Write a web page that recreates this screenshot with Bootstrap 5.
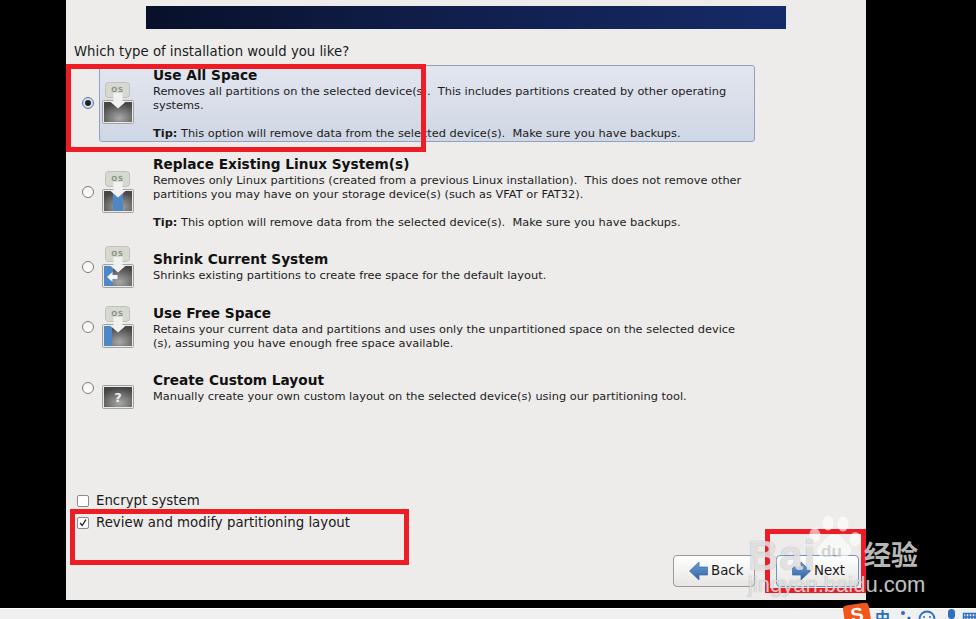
<!DOCTYPE html>
<html lang="en"><head><meta charset="utf-8"><title>Installer</title>
<link rel="stylesheet" href="https://cdn.jsdelivr.net/npm/bootstrap@5.3.0/dist/css/bootstrap.min.css">
<style>
html,body{height:619px;overflow:hidden;background:#000}
body{position:relative;font-family:"DejaVu Sans",sans-serif;color:#1a1a1a}
.stage{width:800px;height:600px;margin-left:66px;background:#edecea;position:relative}
.banner{height:23px;width:640px;margin:0 0 0 80px;background:linear-gradient(90deg,#081029 0%,#0f1d47 40%,#13245a 75%,#152b68 100%)}
.stage-top{padding-top:6px}
.ask{font-size:13.25px;line-height:18px;padding:14px 0 0 8px;height:36px}
.opts{padding-left:16px}
.opt{display:flex;align-items:center;gap:5px;margin-bottom:19px;width:673px}
.opt.first{margin-bottom:12px}
.opt.shrink{margin-bottom:20px}
.opt-radio{width:12px;height:12px;border-radius:50%;border:1px solid #7d7d7d;background:linear-gradient(#f4f4f4,#fff);flex:none;display:flex;align-items:center;justify-content:center}
.opt-radio.on{border-color:#5f7fb5;box-shadow:0 0 0 1px #b9c9e2 inset;background:#e9ecf2;margin-top:-2px}
.opt-radio.low{margin-top:2px}
.opt-body{flex:1;display:flex;align-items:center;gap:19px;padding:0 0 0 2px;border:1px solid transparent;border-radius:3px}
.opt-radio.on::after{content:"";width:6px;height:6px;border-radius:50%;background:#222}
.opt-body.sel{background:linear-gradient(#e3e6ef,#cfd6e4);border-color:#8fa3c0;padding-bottom:1px}
.opt-ico{width:32px;height:42px;flex:none;display:block;margin:-6px 0}
.opt-ico.low{position:relative;top:1px}
.opt-head{font-size:13.7px;font-weight:700;line-height:18px;color:#111}
.opt-text{font-size:11.36px;line-height:14px;color:#1c1c1c;white-space:pre-wrap}
.opt-text b{font-weight:700}
.checks{position:absolute;left:11px;top:490px;font-size:13.33px;line-height:22px}
.chk{display:flex;align-items:center;gap:7px;height:22px}
.chk-box{width:12px;height:12px;border:1px solid #8a8a8a;background:#fff;border-radius:2px;display:block;flex:none}
.actions{position:absolute;right:7px;top:555px;display:flex;gap:21px}
.gbtn{width:82px;height:32px;border:1px solid #9a9a9a;border-radius:4px;background:linear-gradient(#fff,#e6e5e3);font-size:13.33px;color:#1a1a1a;display:flex;align-items:center;justify-content:flex-start;gap:3px;padding:0 0 0 15px}
.gbtn.act{width:83px;border-color:#6d94c6}
.redbox{position:absolute;border:5px solid #ee1c25;pointer-events:none}
.rb1{left:66px;top:64px;width:360px;height:88px}
.rb2{left:70px;top:509px;width:339px;height:56px}
.rb3{left:765px;top:529px;width:101px;height:64px}
.bar{position:absolute;left:0;right:0;top:608px;height:11px;background:#f0f0f0;border-top:1px solid #fff;overflow:hidden}
.tray{position:absolute;left:842px;right:0;top:603px;height:16px;overflow:hidden}
.tray-s{position:absolute;left:2px;top:1px;width:26px;height:22px;background:#f0561e;border-radius:4px;transform:rotate(-9deg);color:#fff;font:700 19px/22px "Liberation Sans",sans-serif;text-align:center}
.tray-zh{position:absolute;left:33px;top:5px;color:#2a6fc0;font:700 15px/18px "Noto Sans CJK SC",sans-serif}
.tray-ico{position:absolute;left:56px;top:5px;display:block}
.wm{position:absolute;color:rgba(255,255,255,.72);pointer-events:none;font-family:"Liberation Sans",sans-serif;text-shadow:0 0 1px rgba(70,70,70,.55)}
.wm-b{left:748px;top:534px;font-size:42px;font-weight:700;line-height:44px;letter-spacing:1px}
.wm-cn{left:864px;top:538px;font-size:27px;font-weight:700;line-height:32px;font-family:"Noto Sans CJK SC",sans-serif;color:rgba(255,255,255,.72);text-shadow:none}
.wm-url{left:748px;top:574px;font-size:22px;line-height:22px}
.wm-paw{position:absolute;left:805px;top:513px;pointer-events:none}
.wm-du{left:821px;top:543px;font-size:17px;font-weight:700;line-height:17px;color:rgba(150,150,150,.4);text-shadow:none}
</style></head><body>
<svg width="0" height="0" class="position-absolute"><defs>
<radialGradient id="gr" cx=".55" cy=".8" r=".75"><stop offset="0" stop-color="#a8a8a8"/><stop offset="1" stop-color="#474747"/></radialGradient>
<symbol id="tag" viewBox="0 0 32 42"><rect x="3.500" y=".5" width="24" height="15" rx="3" fill="#d6d9cf" stroke="#bfc2b9"/><text x="15.500" y="9.500" font-size="7" font-weight="700" text-anchor="middle" fill="#8e9189" font-family="DejaVu Sans" letter-spacing=".8">OS</text></symbol>
<symbol id="arrow" viewBox="0 0 32 42"><path d="M11.500 11h9v8h4l-8.500 7.500-8.500-7.500h4z" fill="#f1f1ef"/></symbol>
<symbol id="box" viewBox="0 0 32 42"><rect x=".5" y="18.500" width="31" height="23" rx="1" fill="#e8e8e6" stroke="#a3a3a0"/><rect x="2" y="20" width="28" height="20" fill="url(#gr)"/></symbol>
</defs></svg>
<main class="stage">
<div class="stage-top"><div class="banner"></div></div>
<div class="ask">Which type of installation would you like?</div>
<div class="opts">
<div class="opt first"><span class="opt-radio on"></span><div class="opt-body sel">
<svg class="opt-ico" viewBox="0 0 32 42"><use href="#box"/><use href="#tag"/><use href="#arrow"/></svg>
<div><div class="opt-head">Use All Space</div><div class="opt-text">Removes all partitions on the selected device(s).  This includes partitions created by other operating
systems.

<b>Tip:</b> This option will remove data from the selected device(s).  Make sure you have backups.</div></div></div></div>

<div class="opt"><span class="opt-radio"></span><div class="opt-body">
<svg class="opt-ico" viewBox="0 0 32 42"><use href="#box"/><rect x="11" y="20" width="10" height="20" fill="#4f86c6"/><use href="#tag"/><use href="#arrow"/></svg>
<div><div class="opt-head">Replace Existing Linux System(s)</div><div class="opt-text">Removes only Linux partitions (created from a previous Linux installation).  This does not remove other
partitions you may have on your storage device(s) (such as VFAT or FAT32).

<b>Tip:</b> This option will remove data from the selected device(s).  Make sure you have backups.</div></div></div></div>

<div class="opt shrink"><span class="opt-radio low"></span><div class="opt-body">
<svg class="opt-ico low" viewBox="0 0 32 42"><use href="#box"/><rect x="2" y="20" width="9" height="20" fill="#4f86c6"/><path d="M5 31l5.500-5v3h5v4h-5v3z" fill="#f4f4f2"/><use href="#tag"/><use href="#arrow"/></svg>
<div><div class="opt-head">Shrink Current System</div><div class="opt-text">Shrinks existing partitions to create free space for the default layout.</div></div></div></div>

<div class="opt"><span class="opt-radio"></span><div class="opt-body">
<svg class="opt-ico" viewBox="0 0 32 42"><use href="#box"/><rect x="2" y="20" width="8" height="20" fill="#4f86c6"/><use href="#tag"/><use href="#arrow"/></svg>
<div><div class="opt-head">Use Free Space</div><div class="opt-text">Retains your current data and partitions and uses only the unpartitioned space on the selected device
(s), assuming you have enough free space available.</div></div></div></div>

<div class="opt"><span class="opt-radio low"></span><div class="opt-body">
<svg class="opt-ico low" viewBox="0 0 32 42"><use href="#box"/><text x="16" y="35" font-size="13" font-weight="700" text-anchor="middle" fill="#eee" font-family="DejaVu Sans">?</text></svg>
<div><div class="opt-head">Create Custom Layout</div><div class="opt-text">Manually create your own custom layout on the selected device(s) using our partitioning tool.</div></div></div></div>
</div>
<div class="checks">
<div class="chk"><span class="chk-box"></span><span>Encrypt system</span></div>
<div class="chk"><svg class="chk-box" viewBox="0 0 12 12"><path d="M2.500 6l2.500 3 4.500-7" fill="none" stroke="#222" stroke-width="1.600"/></svg><span>Review and modify partitioning layout</span></div>
</div>
<div class="actions">
<button class="btn gbtn" type="button"><svg width="19" height="20" viewBox="0 0 19 20"><defs><linearGradient id="ag" x1="0" y1="0" x2="0" y2="1"><stop offset="0" stop-color="#6f9fd6"/><stop offset="1" stop-color="#2f62a3"/></linearGradient></defs><path d="M.5 10L10 1v5h8.500v8H10v5z" fill="url(#ag)" stroke="#3a6aa6" stroke-width=".7"/></svg>Back</button>
<button class="btn gbtn act" type="button"><svg width="19" height="20" viewBox="0 0 19 20"><path d="M18.500 10L9 1v5H.5v8H9v5z" fill="url(#ag)" stroke="#3a6aa6" stroke-width=".7"/></svg>Next</button>
</div>
</main>
<div class="bar"></div>
<div class="tray"><span class="tray-s">S</span><span class="tray-zh">中</span>
<svg class="tray-ico" width="78" height="14" viewBox="0 0 78 14"><circle cx="5" cy="5" r="2" fill="#2a6fc0"/><circle cx="11" cy="10" r="1.500" fill="#2a6fc0"/><circle cx="29" cy="11" r="7.500" fill="none" stroke="#2a6fc0" stroke-width="1.800"/><circle cx="26" cy="9" r="1" fill="#2a6fc0"/><circle cx="32" cy="9" r="1" fill="#2a6fc0"/><rect x="50" y="1" width="7" height="10" rx="3.500" fill="#2a6fc0"/><path d="M47 9a6.500 6.500 0 0 0 13 0v5H47z" fill="#2a6fc0"/><path d="M65.500 5.500h14v9h-14zM68 5v9M71 5v9M74 5v9M77 5v9M66 9h14" fill="none" stroke="#2a6fc0" stroke-width="1.400"/></svg></div>
<div class="redbox rb1"></div><div class="redbox rb2"></div><div class="redbox rb3"></div>
<svg class="wm-paw" width="58" height="46" viewBox="0 0 58 46"><g fill="#fff" fill-opacity=".62"><ellipse cx="10" cy="22" rx="5.500" ry="7" transform="rotate(-12 10 22)"/><ellipse cx="23" cy="10" rx="5.500" ry="7.500"/><ellipse cx="38" cy="11" rx="5.500" ry="7.500"/><ellipse cx="50" cy="26" rx="5.500" ry="7" transform="rotate(12 50 26)"/><path d="M30 21c7 0 9 7 14 11 5 5 1 13-7 12-4 0-6-2-8-2s-5 2-9 2c-8 0-10-7-6-11 5-4 8-12 16-12z"/></g></svg>
<div class="wm wm-b">Bai</div>
<div class="wm wm-du">du</div>
<div class="wm wm-cn">经验</div>
<div class="wm wm-url">jingyan.baidu.com</div>
</body></html>
